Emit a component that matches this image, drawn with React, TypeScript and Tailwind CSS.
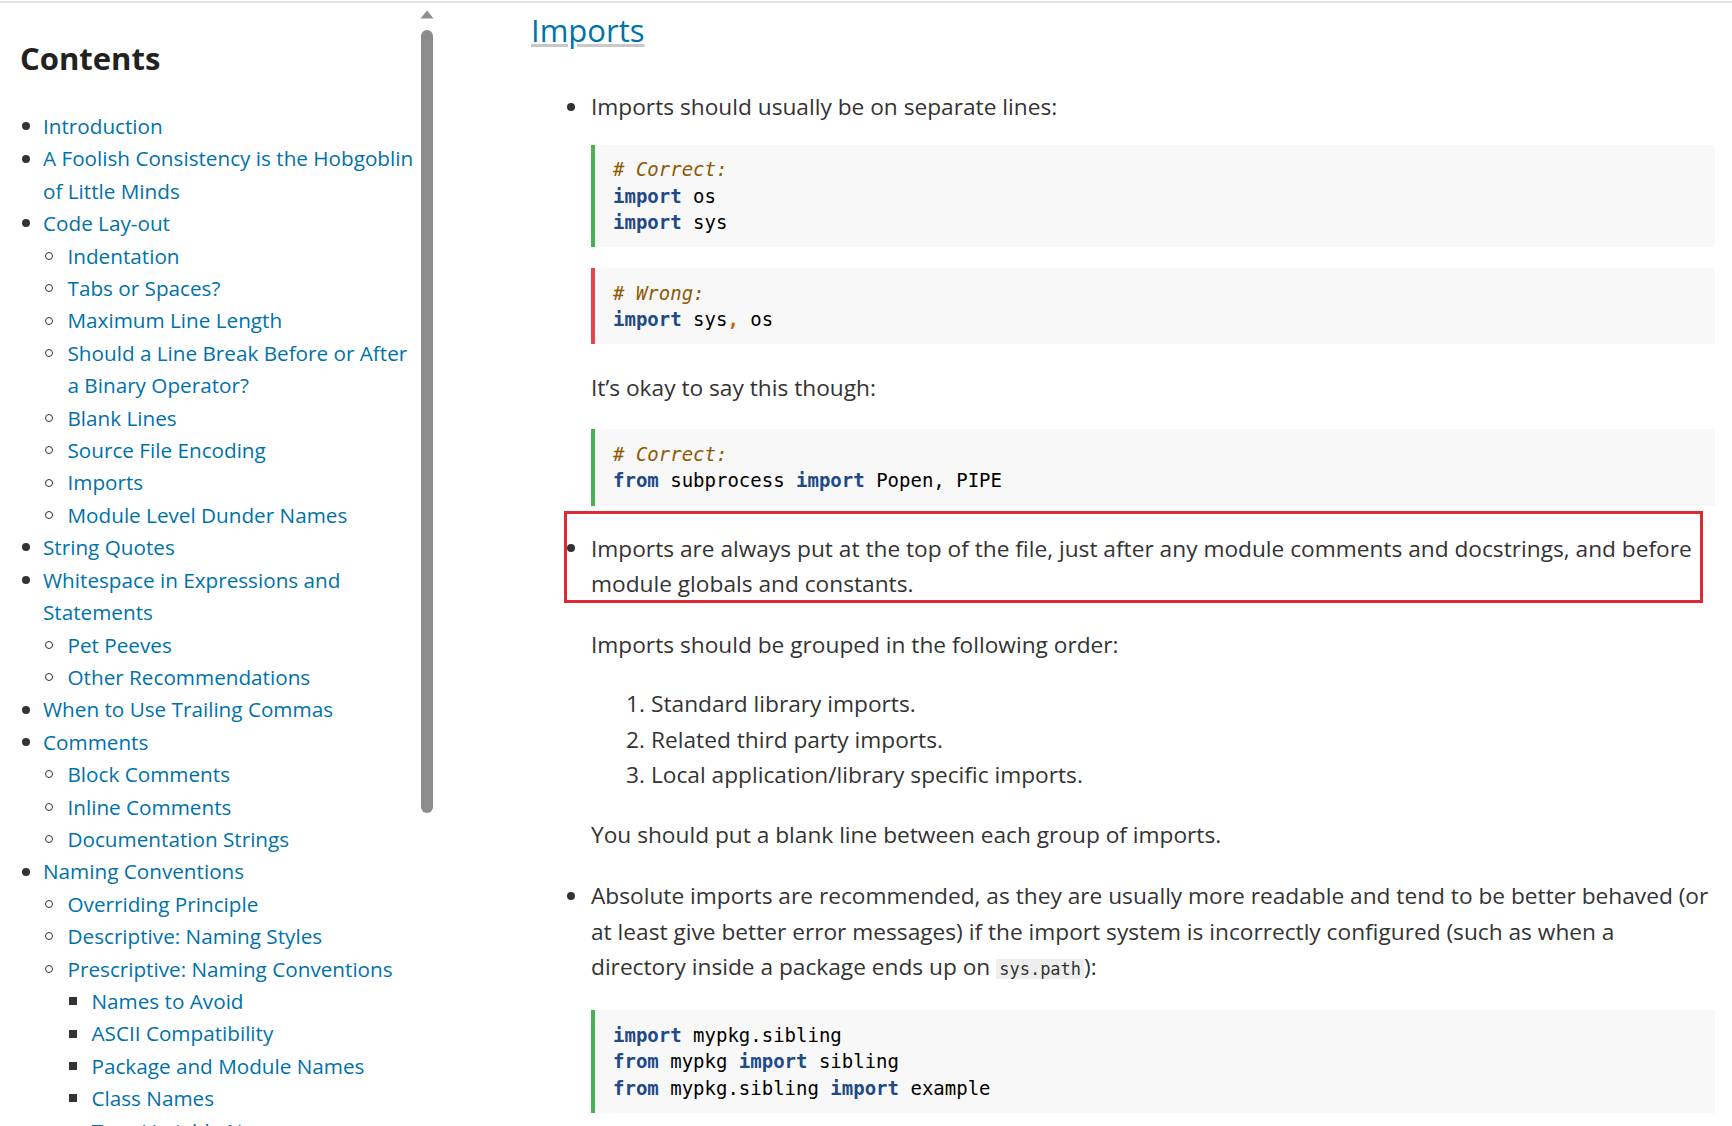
import React from "react";

type TocNode = { label: string; children?: TocNode[] };

const toc: TocNode[] = [
  { label: "Introduction" },
  { label: "A Foolish Consistency is the Hobgoblin\nof Little Minds" },
  {
    label: "Code Lay-out",
    children: [
      { label: "Indentation" },
      { label: "Tabs or Spaces?" },
      { label: "Maximum Line Length" },
      { label: "Should a Line Break Before or After\na Binary Operator?" },
      { label: "Blank Lines" },
      { label: "Source File Encoding" },
      { label: "Imports" },
      { label: "Module Level Dunder Names" },
    ],
  },
  { label: "String Quotes" },
  {
    label: "Whitespace in Expressions and\nStatements",
    children: [{ label: "Pet Peeves" }, { label: "Other Recommendations" }],
  },
  { label: "When to Use Trailing Commas" },
  {
    label: "Comments",
    children: [
      { label: "Block Comments" },
      { label: "Inline Comments" },
      { label: "Documentation Strings" },
    ],
  },
  {
    label: "Naming Conventions",
    children: [
      { label: "Overriding Principle" },
      { label: "Descriptive: Naming Styles" },
      {
        label: "Prescriptive: Naming Conventions",
        children: [
          { label: "Names to Avoid" },
          { label: "ASCII Compatibility" },
          { label: "Package and Module Names" },
          { label: "Class Names" },
          { label: "Type Variable Names" },
          { label: "Exception Names" },
        ],
      },
    ],
  },
];

const Marker = ({ depth }: { depth: number }) => {
  if (depth === 0) return <span className="h-[8px] w-[8px] rounded-full bg-[#333]" />;
  if (depth === 1) return <span className="h-[8px] w-[8px] rounded-full border-[1.5px] border-[#333]" />;
  return <span className="h-[8px] w-[8px] bg-[#333]" />;
};

const TocList = ({ items, depth }: { items: TocNode[]; depth: number }) => {
  const col = depth === 0 ? "w-[23px]" : depth === 1 ? "w-[24.5px]" : "w-[24px]";
  const indent = depth === 0 ? "pl-[23px]" : "pl-[24.5px]";
  return (
    <ul>
      {items.map((it) => (
        <li key={it.label}>
          <div className="flex">
            <span className={`${col} flex h-[32.4px] shrink-0 items-center pl-[1.5px]`}>
              <Marker depth={depth} />
            </span>
            <a className="whitespace-pre text-[#0072aa]">{it.label}</a>
          </div>
          {it.children && (
            <div className={indent}>
              <TocList items={it.children} depth={depth + 1} />
            </div>
          )}
        </li>
      ))}
    </ul>
  );
};

const Kw = ({ children }: { children: React.ReactNode }) => (
  <span className="font-bold text-[#204a87]">{children}</span>
);

const Cm = ({ children }: { children: React.ReactNode }) => (
  <span className="italic text-[#8f5902]">{children}</span>
);

const Code = ({ bad, lines, className = "" }: { bad?: boolean; lines: React.ReactNode[]; className?: string }) => (
  <pre
    className={`${className} border-l-4 ${bad ? "border-[#e0474c]" : "border-[#4cae57]"} bg-[#f8f8f8] py-[11.6px] pl-[18px] font-['DejaVu_Sans_Mono',monospace] text-[19px] leading-[26.5px] text-black`}
  >
    {lines.map((l, i) => (
      <div key={i}>{l}</div>
    ))}
  </pre>
);

const Bullet = () => (
  <span className="flex h-[35.5px] w-[60px] shrink-0 items-center">
    <span className="ml-[36px] h-[8px] w-[8px] rounded-full bg-[#333]" />
  </span>
);

export default function App() {
  return (
    <div className="flex h-[1126px] w-full flex-col overflow-hidden bg-white font-['Open_Sans',sans-serif] text-[#333]">
      <div className="mt-px h-[2px] shrink-0 bg-[#e3e3e3]" />
      <div className="flex min-h-0 flex-1">
        <aside className="flex w-[440px] shrink-0">
          <nav className="w-[416px] pl-[20px] pt-[35px] text-[20.7px] leading-[32.4px]">
            <h2 className="text-[31px] font-bold leading-[40px] text-[#222]">Contents</h2>
            <div className="mt-[32px]">
              <TocList items={toc} depth={0} />
            </div>
          </nav>
          <div className="ml-[5px] flex w-[12px] flex-col items-center pt-[7px]">
            <svg width="14" height="9" viewBox="0 0 14 9">
              <path d="M7 0.5 L13.5 8.5 L0.5 8.5 Z" fill="#8f8f8f" />
            </svg>
            <div className="mt-[11px] h-[783px] w-[12px] rounded-full bg-[#8c8c8c]" />
          </div>
        </aside>

        <main className="min-w-0 flex-1 pl-[91px] pr-[17px] text-[22.7px] leading-[35.5px]">
          <h2 className="mt-[7px] text-[31px] leading-[40px]">
            <a className="text-[#0072aa] underline decoration-[#c8c8c8] decoration-[3px] underline-offset-[2px]">
              Imports
            </a>
          </h2>

          <ul className="mt-[39px]">
            <li className="flex">
              <Bullet />
              <div className="min-w-0 flex-1">
                <p>Imports should usually be on separate lines:</p>
                <Code
                  className="mt-[20px]"
                  lines={[
                    <Cm># Correct:</Cm>,
                    <><Kw>import</Kw> os</>,
                    <><Kw>import</Kw> sys</>,
                  ]}
                />
                <Code
                  bad
                  className="mt-[21px]"
                  lines={[
                    <Cm># Wrong:</Cm>,
                    <><Kw>import</Kw> sys<span className="font-bold text-[#ce5c00]">,</span> os</>,
                  ]}
                />
                <p className="mt-[26px]">It’s okay to say this though:</p>
                <Code
                  className="mt-[23.5px]"
                  lines={[
                    <Cm># Correct:</Cm>,
                    <><Kw>from</Kw> subprocess <Kw>import</Kw> Popen, PIPE</>,
                  ]}
                />
              </div>
            </li>

            <li className="relative mt-[25px] flex">
              <div className="pointer-events-none absolute -top-[19.5px] left-[33px] right-[12.5px] h-[92px] border-[3px] border-[#df2a33]" />
              <Bullet />
              <div className="min-w-0 flex-1">
                <p>
                  Imports are always put at the top of the file, just after any module comments and docstrings, and
                  before module globals and constants.
                </p>
                <p className="mt-[25px]">Imports should be grouped in the following order:</p>
                <ol className="mt-[24px] pl-[35px]">
                  {["Standard library imports.", "Related third party imports.", "Local application/library specific imports."].map(
                    (t, i) => (
                      <li key={t} className="flex">
                        <span className="w-[25px] shrink-0">{i + 1}.</span>
                        <span>{t}</span>
                      </li>
                    )
                  )}
                </ol>
                <p className="mt-[24.5px]">You should put a blank line between each group of imports.</p>
              </div>
            </li>

            <li className="mt-[25.5px] flex">
              <Bullet />
              <div className="min-w-0 flex-1">
                <p>
                  Absolute imports are recommended, as they are usually more readable and tend to be better behaved (or
                  at least give better error messages) if the import system is incorrectly configured (such as when a
                  directory inside a package ends up on{" "}
                  <code className="rounded-[2px] bg-[#eeeeee] px-[3px] font-['DejaVu_Sans_Mono',monospace] text-[17px]">
                    sys.path
                  </code>
                  ):
                </p>
                <Code
                  className="mt-[22.5px]"
                  lines={[
                    <><Kw>import</Kw> mypkg.sibling</>,
                    <><Kw>from</Kw> mypkg <Kw>import</Kw> sibling</>,
                    <><Kw>from</Kw> mypkg.sibling <Kw>import</Kw> example</>,
                  ]}
                />
              </div>
            </li>
          </ul>
        </main>
      </div>
    </div>
  );
}
